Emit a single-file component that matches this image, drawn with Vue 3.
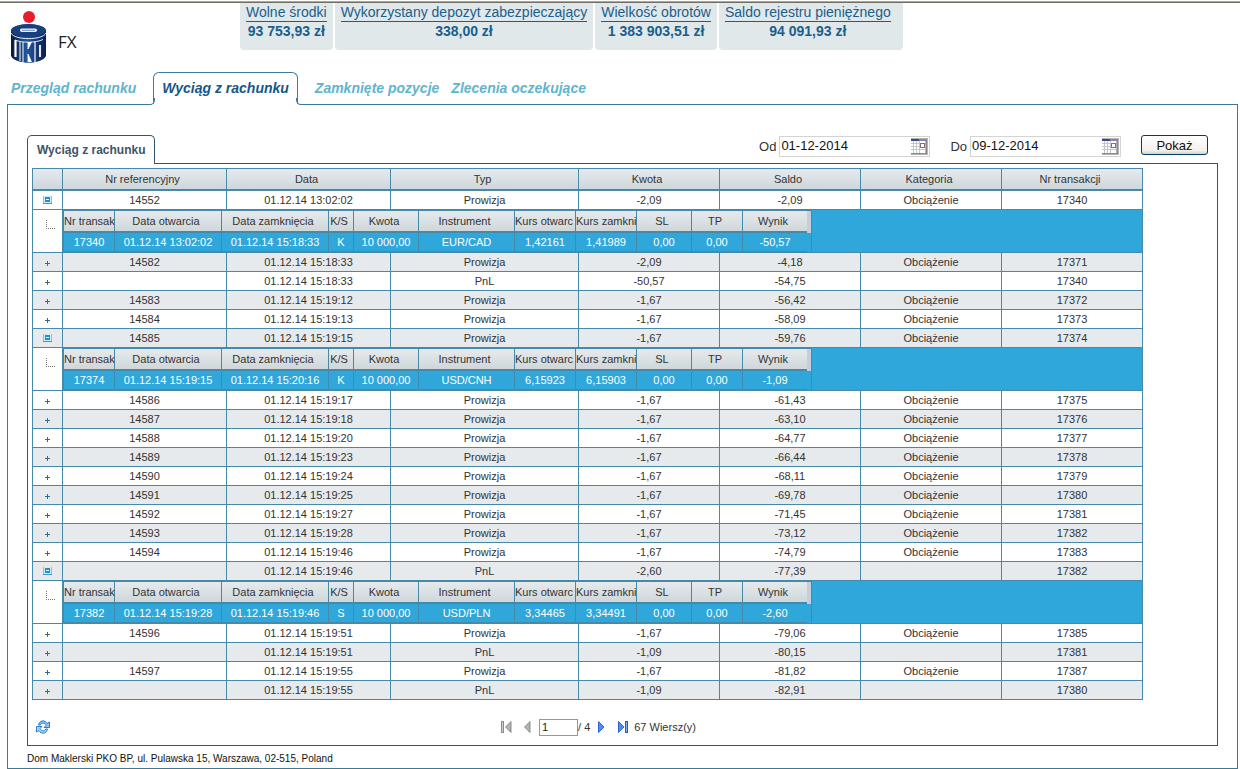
<script setup>
import { ref } from 'vue'

const stats = [
  { label: 'Wolne środki', value: '93 753,93 zł' },
  { label: 'Wykorzystany depozyt zabezpieczający', value: '338,00 zł' },
  { label: 'Wielkość obrotów', value: '1 383 903,51 zł' },
  { label: 'Saldo rejestru pieniężnego', value: '94 091,93 zł' },
]

const tabs = ['Przegląd rachunku', 'Wyciąg z rachunku', 'Zamknięte pozycje', 'Zlecenia oczekujące']
const activeTab = 'Wyciąg z rachunku'

const columns = ['Nr referencyjny', 'Data', 'Typ', 'Kwota', 'Saldo', 'Kategoria', 'Nr transakcji']
const subColumns = [
  'Nr transak', 'Data otwarcia', 'Data zamknięcia', 'K/S', 'Kwota', 'Instrument',
  'Kurs otwarc', 'Kurs zamkni', 'SL', 'TP', 'Wynik',
]

const P = 'Prowizja'
const O = 'Obciążenie'
const rows = ref([
  {
    cells: ['14552', '01.12.14 13:02:02', P, '-2,09', '-2,09', O, '17340'],
    detail: ['17340', '01.12.14 13:02:02', '01.12.14 15:18:33', 'K', '10 000,00', 'EUR/CAD', '1,42161', '1,41989', '0,00', '0,00', '-50,57'],
  },
  { cells: ['14582', '01.12.14 15:18:33', P, '-2,09', '-4,18', O, '17371'] },
  { cells: ['', '01.12.14 15:18:33', 'PnL', '-50,57', '-54,75', '', '17340'] },
  { cells: ['14583', '01.12.14 15:19:12', P, '-1,67', '-56,42', O, '17372'] },
  { cells: ['14584', '01.12.14 15:19:13', P, '-1,67', '-58,09', O, '17373'] },
  {
    cells: ['14585', '01.12.14 15:19:15', P, '-1,67', '-59,76', O, '17374'],
    detail: ['17374', '01.12.14 15:19:15', '01.12.14 15:20:16', 'K', '10 000,00', 'USD/CNH', '6,15923', '6,15903', '0,00', '0,00', '-1,09'],
  },
  { cells: ['14586', '01.12.14 15:19:17', P, '-1,67', '-61,43', O, '17375'] },
  { cells: ['14587', '01.12.14 15:19:18', P, '-1,67', '-63,10', O, '17376'] },
  { cells: ['14588', '01.12.14 15:19:20', P, '-1,67', '-64,77', O, '17377'] },
  { cells: ['14589', '01.12.14 15:19:23', P, '-1,67', '-66,44', O, '17378'] },
  { cells: ['14590', '01.12.14 15:19:24', P, '-1,67', '-68,11', O, '17379'] },
  { cells: ['14591', '01.12.14 15:19:25', P, '-1,67', '-69,78', O, '17380'] },
  { cells: ['14592', '01.12.14 15:19:27', P, '-1,67', '-71,45', O, '17381'] },
  { cells: ['14593', '01.12.14 15:19:28', P, '-1,67', '-73,12', O, '17382'] },
  { cells: ['14594', '01.12.14 15:19:46', P, '-1,67', '-74,79', O, '17383'] },
  {
    cells: ['', '01.12.14 15:19:46', 'PnL', '-2,60', '-77,39', '', '17382'],
    detail: ['17382', '01.12.14 15:19:28', '01.12.14 15:19:46', 'S', '10 000,00', 'USD/PLN', '3,34465', '3,34491', '0,00', '0,00', '-2,60'],
  },
  { cells: ['14596', '01.12.14 15:19:51', P, '-1,67', '-79,06', O, '17385'] },
  { cells: ['', '01.12.14 15:19:51', 'PnL', '-1,09', '-80,15', '', '17381'] },
  { cells: ['14597', '01.12.14 15:19:55', P, '-1,67', '-81,82', O, '17387'] },
  { cells: ['', '01.12.14 15:19:55', 'PnL', '-1,09', '-82,91', '', '17380'] },
])

const dates = ref([
  { id: 'date-from', label: 'Od', value: '01-12-2014' },
  { id: 'date-to', label: 'Do', value: '09-12-2014' },
])
const page = ref('1')
</script>

<template>
  <div class="page">
    <header class="top">
      <div class="brand">
        <svg class="logo" width="38" height="54" viewBox="0 0 38 54" aria-hidden="true">
          <defs>
            <linearGradient id="drum" x1="0" x2="1">
              <stop offset="0" stop-color="#0a1838" />
              <stop offset=".45" stop-color="#23579f" />
              <stop offset="1" stop-color="#0a1f50" />
            </linearGradient>
          </defs>
          <circle cx="19" cy="6" r="6" fill="#ea1c2c" />
          <path d="M1 20C1 11 36 11 36 20V45C32 54 5 54 1 45Z" fill="url(#drum)" />
          <ellipse cx="18.500" cy="19.500" rx="17.500" ry="6.500" fill="#17407f" />
          <rect x="10" y="17.500" width="17" height="3.500" rx="1.700" fill="#e9eff8" />
          <rect x="12" y="18.800" width="13" height="1" fill="#6d8fc0" />
          <path d="M1 22C4 29.500 33 29.500 36 22" fill="none" stroke="#fff" stroke-width=".9" />
          <path d="M5.500 29V46" stroke="#fff" stroke-width="2.200" />
          <path d="M5 29C12 32 26 32 33 28.500" fill="none" stroke="#dfe8f4" stroke-width="1" />
          <path d="M10 31V50M13 31V52" stroke="#fff" stroke-width="1" />
          <path d="M18 31V38L21.500 31M18 51V43L21.500 51" fill="#fff" stroke="#fff" stroke-width=".8" />
          <path d="M25 30.500V51" stroke="#fff" stroke-width="1.200" />
          <path d="M30 34V46" stroke="#fff" stroke-width="1.800" />
        </svg>
        <span class="fx">FX</span>
      </div>
      <dl class="stats">
        <div v-for="s in stats" :key="s.label" class="stat">
          <dt>{{ s.label }}</dt>
          <dd>{{ s.value }}</dd>
        </div>
      </dl>
    </header>

    <nav class="tabs">
      <a v-for="t in tabs" :key="t" href="#" class="tab" :class="{ active: t === activeTab }">{{ t }}</a>
    </nav>

    <main class="box">
      <div class="bar">
        <h1 class="subtab">Wyciąg z rachunku</h1>
        <form class="filter" @submit.prevent>
          <div v-for="d in dates" :key="d.id" class="field">
            <label :for="d.id">{{ d.label }}</label>
            <span class="date">
              <input :id="d.id" v-model="d.value" type="text">
              <button type="button" class="plain" :aria-label="'Kalendarz ' + d.label">
                <svg width="17" height="17" viewBox="0 0 17 17">
                  <rect width="17" height="17" fill="#b5b2b8" />
                  <rect x="0" y="3" width="14" height="12" fill="#fff" />
                  <rect x="0" y="1" width="8" height="2" fill="#39498c" />
                  <rect x="8" y="1" width="7" height="2" fill="#8c86a0" />
                  <path d="M0 5.500H14M0 8.500H14M0 11.500H14M2.500 3V15M5.500 3V15M8.500 3V15" stroke="#c6c4cc" />
                  <rect x="9.500" y="5.500" width="4" height="4" fill="#fff" stroke="#8e6d66" />
                  <path d="M15.500 1V16M0 15.500H16" stroke="#8b8890" />
                </svg>
              </button>
            </span>
          </div>
          <button type="submit" class="show">Pokaż</button>
        </form>
      </div>

      <section class="panel">
        <table class="grid">
          <colgroup>
            <col class="c-exp"><col class="c-ref"><col class="c-ref"><col class="c-typ">
            <col class="c-num"><col class="c-num"><col class="c-num"><col class="c-num">
          </colgroup>
          <thead>
            <tr>
              <th aria-label="Szczegóły"></th>
              <th v-for="c in columns" :key="c"><span>{{ c }}</span></th>
            </tr>
          </thead>
          <tbody>
            <template v-for="(r, i) in rows" :key="i">
              <tr :class="{ alt: i % 2 }">
                <td>
                  <button type="button" class="plain toggle" :aria-label="r.detail ? 'Zwiń' : 'Rozwiń'">
                    <svg v-if="r.detail" width="9" height="8" viewBox="0 0 9 8">
                      <rect width="9" height="8" fill="#7cc4e4" />
                      <rect x="1" y="0" width="7" height="7" fill="#d5edf7" />
                      <rect x="2" y="1" width="5" height="5" fill="#2390c4" />
                      <rect x="3" y="3" width="3" height="1" fill="#fff" />
                      <rect y="7" width="9" height="1" fill="#2f9fcf" />
                    </svg>
                    <svg v-else class="plus" width="5" height="5" viewBox="0 0 5 5">
                      <path d="M0 2.500H5M2.500 0V5" stroke="#2c6d97" />
                    </svg>
                  </button>
                </td>
                <td v-for="(c, k) in r.cells" :key="k">{{ c }}</td>
              </tr>
              <tr v-if="r.detail">
                <td class="branch">
                  <svg width="10" height="10" viewBox="0 0 10 10" aria-hidden="true">
                    <path d="M.5 0V9M0 8.500H10" fill="none" stroke="#777" stroke-dasharray="1 1" />
                  </svg>
                </td>
                <td class="nest" colspan="7">
                  <table class="sub">
                    <colgroup>
                      <col v-for="(c, k) in subColumns" :key="k" :class="'s' + k">
                      <col class="gutter">
                    </colgroup>
                    <thead>
                      <tr>
                        <th v-for="c in subColumns" :key="c"><span>{{ c }}</span></th>
                        <td class="scroll"></td>
                      </tr>
                    </thead>
                    <tbody>
                      <tr>
                        <td v-for="(c, k) in r.detail" :key="k">{{ c }}</td>
                        <td class="end"></td>
                      </tr>
                    </tbody>
                  </table>
                </td>
              </tr>
            </template>
          </tbody>
        </table>

        <div class="pager">
          <button type="button" class="plain" aria-label="Odśwież">
            <svg width="14" height="14" viewBox="0 0 14 14">
              <path d="M2.500 5C3.500 0 9 -.5 11 3.500L13.500 2V7.500H8L10 5.500C8.500 2.200 5 2.500 4.500 5Z" fill="#8cc5f5" stroke="#1b6fc8" stroke-width=".9" />
              <path d="M11.500 9C10.500 14 5 14.500 3 10.500L.5 12V6.500H6L4 8.500C5.500 11.800 9 11.500 9.500 9Z" fill="#a9d6fa" stroke="#1b6fc8" stroke-width=".9" />
            </svg>
          </button>
          <div class="nav">
            <button type="button" class="plain" aria-label="Pierwsza strona">
              <svg width="11" height="12" viewBox="0 0 11 12">
                <rect x="0" y="0" width="3" height="12" fill="#8a8a8a" />
                <rect x="1" y="1" width="1" height="10" fill="#ccc" />
                <path d="M10 .5V11.500L4.500 6Z" fill="#b4b4b4" stroke="#777" stroke-width=".8" />
              </svg>
            </button>
            <button type="button" class="plain prev" aria-label="Poprzednia strona">
              <svg width="7" height="12" viewBox="0 0 7 12">
                <path d="M6 .5V11.500L.5 6Z" fill="#b4b4b4" stroke="#777" stroke-width=".8" />
              </svg>
            </button>
            <input id="page-no" v-model="page" type="text" aria-label="Strona">
            <label class="of" for="page-no">/ 4</label>
            <button type="button" class="plain next" aria-label="Następna strona">
              <svg width="7" height="12" viewBox="0 0 7 12">
                <path d="M.5 .5V11.500L6 6Z" fill="#4b8df0" stroke="#1c4fc0" stroke-width=".8" />
              </svg>
            </button>
            <button type="button" class="plain last" aria-label="Ostatnia strona">
              <svg width="11" height="12" viewBox="0 0 11 12">
                <path d="M.5 .5V11.500L6 6Z" fill="#4b8df0" stroke="#1c4fc0" stroke-width=".8" />
                <rect x="7" y="0" width="3" height="12" fill="#2458c8" />
                <rect x="8" y="1" width="1" height="10" fill="#7fb0f8" />
              </svg>
            </button>
            <span>67 Wiersz(y)</span>
          </div>
        </div>
      </section>

      <footer class="foot">Dom Maklerski PKO BP, ul. Pulawska 15, Warszawa, 02-515, Poland</footer>
    </main>
  </div>
</template>

<style>
body {
  background: #fff;
}
</style>

<style scoped>
.page {
  padding-top: 1px;
  font-family: "Liberation Sans", Arial, sans-serif;
  font-size: 11px;
  color: #333;
}
.page * {
  box-sizing: border-box;
}
.plain {
  display: flex;
  padding: 0;
  border: 0;
  background: none;
}
.top {
  display: grid;
  grid-template-columns: 240px 1fr;
  align-items: start;
  min-height: 71px;
  border-top: 1px solid #aca899;
  box-shadow: inset 0 1px #716f64;
}
.brand {
  display: flex;
  align-items: center;
  gap: 10px;
  padding: 9px 0 0 10px;
}
.fx {
  padding-top: 7px;
  font-family: "Open Sans", "Noto Sans", sans-serif;
  font-size: 17px;
  color: #222;
}
.stats {
  display: flex;
  gap: 2px;
  margin: 1px 0 0;
  font-size: 14px;
  color: #1b5e8c;
}
.stat {
  height: 47px;
  padding: 0 6px;
  border-radius: 0 0 4px 4px;
  background: #e0e8ea;
  text-align: center;
  white-space: nowrap;
}
.stat:last-child {
  padding-right: 12px;
}
.stat dt {
  height: 19px;
  line-height: 19px;
  border-bottom: 1px solid #1b5e8c;
}
.stat dd {
  margin: 0;
  line-height: 19px;
  font-weight: bold;
}
.tabs {
  display: flex;
  gap: 12px;
  height: 33px;
  margin-bottom: -1px;
  padding-left: 11px;
  position: relative;
}
.tab {
  line-height: 33px;
  font-size: 14px;
  font-weight: bold;
  font-style: italic;
  color: #62b4cd;
  text-decoration: none;
  white-space: nowrap;
}
.tab.active {
  position: relative;
  margin: 0 5px;
  padding: 0 8px;
  border: 1px solid #3a7a9c;
  border-bottom: 0;
  border-radius: 6px 6px 0 0;
  background: #fff;
  line-height: 31px;
  color: #17568a;
}
.tab.active::before,
.tab.active::after {
  content: "";
  position: absolute;
  bottom: 0;
  width: 6px;
  height: 6px;
  border: solid #3a7a9c;
}
.tab.active::before {
  left: -6px;
  border-width: 0 1px 1px 0;
  border-bottom-right-radius: 5px;
  box-shadow: 2px 2px #fff;
}
.tab.active::after {
  right: -6px;
  border-width: 0 0 1px 1px;
  border-bottom-left-radius: 5px;
  box-shadow: -2px 2px #fff;
}
.box {
  margin: 0 2px 0 7px;
  padding: 30px 19px 0;
  border: 1px solid #3a7a96;
}
.bar {
  display: flex;
  justify-content: space-between;
  height: 29px;
  margin-bottom: -1px;
  padding-right: 10px;
}
.subtab {
  position: relative;
  margin: 0;
  padding: 0 9px;
  border: 1px solid #34566c;
  border-bottom: 0;
  border-radius: 5px 5px 0 0;
  background: #fff;
  line-height: 28px;
  font-size: 12px;
  color: #3d5566;
}
.filter {
  display: flex;
  align-items: flex-start;
  gap: 20px;
  font-size: 13px;
}
.field {
  display: flex;
  align-items: center;
  gap: 3px;
  padding-top: 1px;
}
.date {
  display: flex;
  align-items: center;
  width: 151px;
  height: 21px;
  padding: 0 1px;
  border: 1px solid #d4d4d4;
}
.date input {
  flex: 1;
  min-width: 0;
  padding: 0 0 2px;
  border: 0;
  background: none;
  font: inherit;
  color: #111;
}
.show {
  width: 67px;
  height: 20px;
  padding: 0;
  border: 1px solid #003c74;
  border-radius: 3px;
  background: linear-gradient(#fff, #f2f1ea 80%, #d9d3c4);
  font: inherit;
  color: #111;
}
.panel {
  padding: 4px 74px 3px 4px;
  border: 1px solid #34566c;
}
.grid,
.sub {
  table-layout: fixed;
  border-collapse: separate;
  border-spacing: 0;
  border: solid #4689a8;
  text-align: center;
}
.grid {
  width: 100%;
  border-width: 1px 0 0 1px;
}
.c-exp { width: 30px; }
.c-ref { width: 164px; }
.c-typ { width: 188px; }
.c-num { width: 141px; }
th,
td {
  height: 19px;
  padding: 0;
  border: solid #4689a8;
  border-width: 0 1px 1px 0;
  line-height: 18px;
  font-weight: normal;
  white-space: nowrap;
}
th {
  height: 22px;
  border-bottom-width: 2px;
  background: linear-gradient(#e6eaec, #cfd7db);
  line-height: 20px;
}
th span {
  display: block;
  padding-right: 4px;
}
.alt td {
  background: #e6eaed;
}
.toggle {
  width: 100%;
  height: 18px;
  align-items: center;
  justify-content: center;
}
.plus {
  margin-top: 3px;
}
.branch {
  padding: 10px 0 0 13px;
  text-align: left;
  vertical-align: top;
  line-height: 0;
}
.nest {
  height: 43px;
  background: #30a7da;
}
.sub {
  width: 749px;
  border-width: 1px 1px 0;
}
.s0 { width: 51px; }
.s1, .s2 { width: 107px; }
.s3 { width: 25px; }
.s4 { width: 65px; }
.s5 { width: 96px; }
.s6, .s7 { width: 61px; }
.s8 { width: 55px; }
.s9 { width: 51px; }
.s10 { width: 64px; }
.gutter { width: 4px; }
.sub tbody td {
  background: #30a7da;
  color: #fff;
}
.sub th:nth-child(11),
.sub td:nth-child(11) {
  border-right: 0;
}
.sub .scroll {
  border: 0;
  background: #c8cddc;
}
.sub .end {
  border: 0;
}
.pager {
  display: grid;
  grid-template-columns: 1fr auto 1fr;
  align-items: center;
  height: 42px;
  padding: 12px 0 0 4px;
}
.nav {
  display: flex;
  align-items: center;
  margin-left: 18px;
}
.prev {
  margin: 0 8px 0 12px;
}
.nav input {
  width: 39px;
  height: 17px;
  padding: 0 2px;
  border: 1px solid #7f9db9;
  background: #fff;
  font: inherit;
  color: #222;
}
.next {
  margin: 0 13px 0 8px;
}
.last {
  margin-right: 5px;
}
.foot {
  height: 22px;
  line-height: 25px;
  font-size: 10px;
  color: #111;
}
</style>
